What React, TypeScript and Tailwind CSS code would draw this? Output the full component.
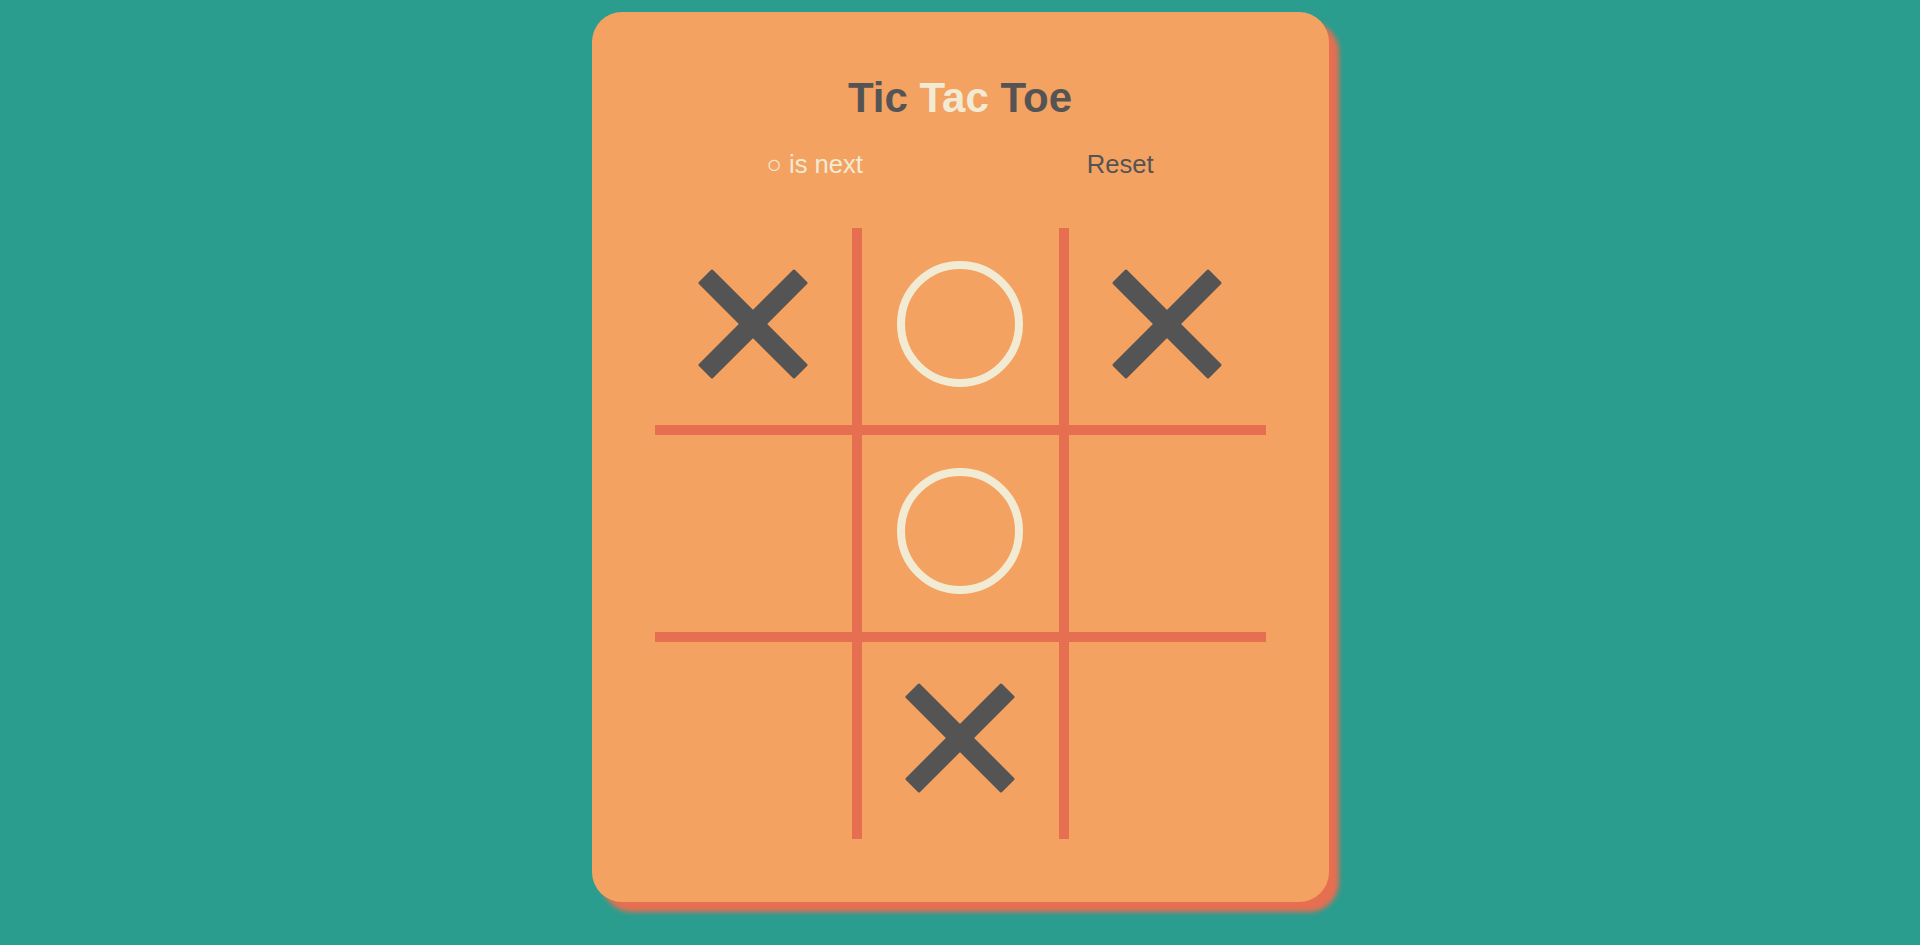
import React, { useState } from "react";

type Mark = "X" | "O" | null;

const initial: Mark[] = ["X", "O", "X", null, "O", null, null, "X", null];

function Cross() {
  return (
    <svg width="112" height="112" viewBox="0 0 112 112">
      <rect x="-12" y="46" width="136" height="20" rx="1.5" fill="#545454" transform="rotate(45 56 56)" />
      <rect x="-12" y="46" width="136" height="20" rx="1.5" fill="#545454" transform="rotate(-45 56 56)" />
    </svg>
  );
}

function Nought() {
  return <div className="w-[126px] h-[126px] rounded-full border-[8px] border-[#f2ebd3]" />;
}

export default function App() {
  const [squares, setSquares] = useState<Mark[]>(initial);
  const xCount = squares.filter((s) => s === "X").length;
  const oCount = squares.filter((s) => s === "O").length;
  const next = xCount > oCount ? "○" : "✕";

  const play = (i: number) => {
    if (squares[i]) return;
    const copy = squares.slice();
    copy[i] = xCount > oCount ? "O" : "X";
    setSquares(copy);
  };

  return (
    <div
      className="min-h-screen bg-[#2a9d8f] flex justify-center pt-[12px]"
      style={{ fontFamily: '"Liberation Sans", Arial, sans-serif' }}
    >
      <div className="w-[737px] h-[890px] bg-[#f4a261] rounded-[30px] shadow-[10px_10px_5px_#e76f51] px-[63px] pt-[62px] pb-[63px] flex flex-col">
        <h1 className="text-center text-[42px] leading-[48px] font-bold text-[#545454]">
          Tic <span className="text-[#f2ebd3]">Tac</span> Toe
        </h1>
        <div className="mt-[27px] flex justify-around text-[25.6px] leading-[30px]">
          <span className="text-[#f2ebd3]">{next} is next</span>
          <button
            className="text-[#545454] cursor-pointer"
            onClick={() => setSquares(Array(9).fill(null))}
          >
            Reset
          </button>
        </div>
        <div className="mt-[49px] grid grid-cols-3 gap-[10px] bg-[#e76f51]">
          {squares.map((s, i) => (
            <div
              key={i}
              onClick={() => play(i)}
              className="h-[197px] bg-[#f4a261] flex items-center justify-center pb-[6px] cursor-pointer"
            >
              {s === "X" && <Cross />}
              {s === "O" && <Nought />}
            </div>
          ))}
        </div>
      </div>
    </div>
  );
}
